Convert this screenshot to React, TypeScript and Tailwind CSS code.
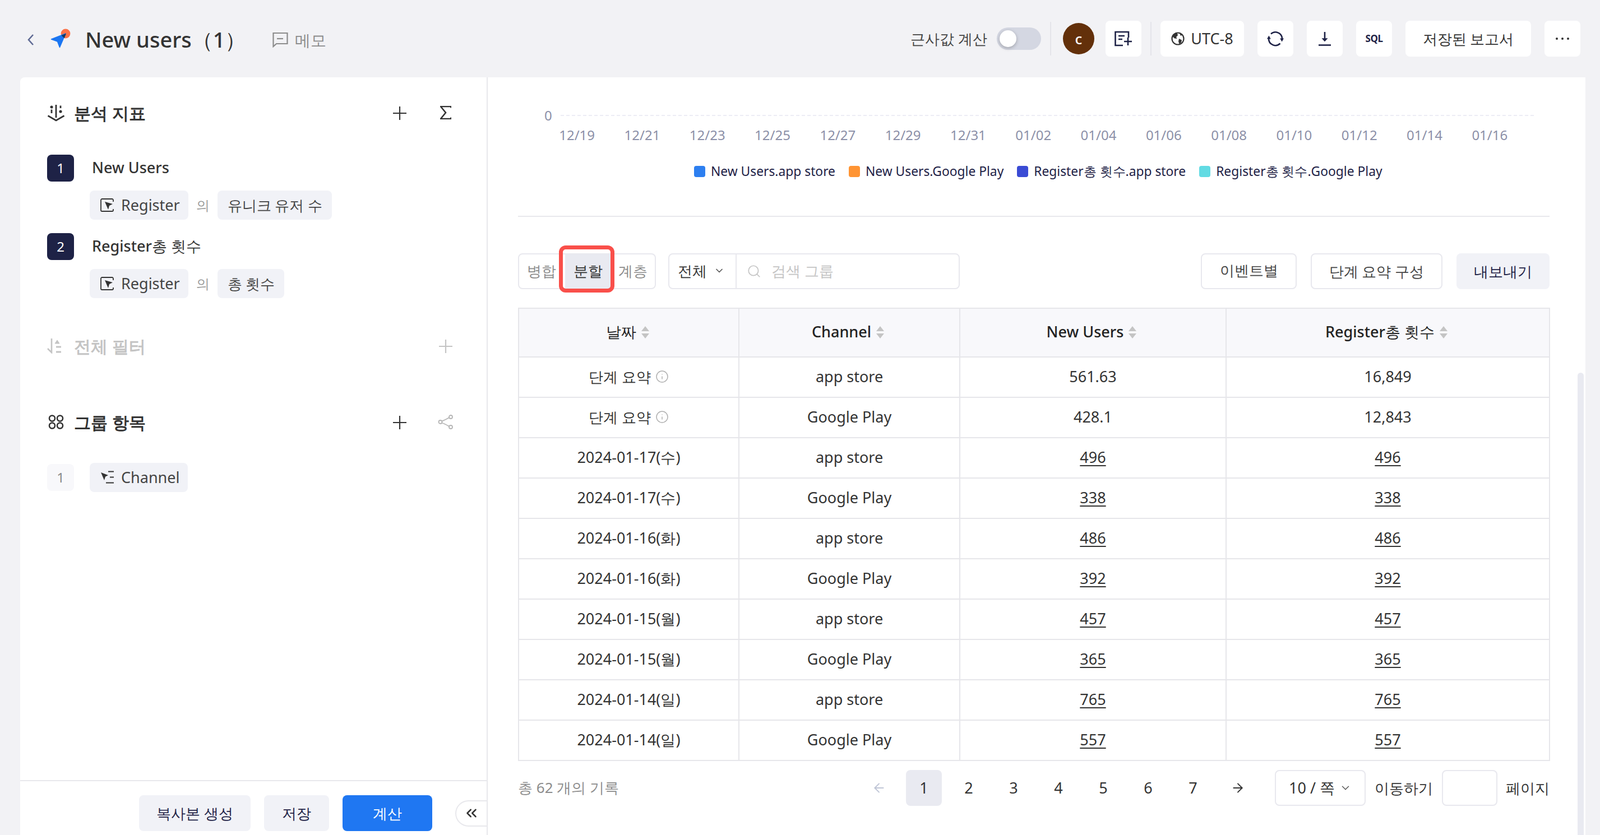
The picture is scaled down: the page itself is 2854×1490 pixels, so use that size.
import { ArrowLeft, ArrowRight, ChevronDown, ChevronsLeft, Info, Search } from 'lucide-react';

const chartDates = ['12/19', '12/21', '12/23', '12/25', '12/27', '12/29', '12/31', '01/02', '01/04', '01/06', '01/08', '01/10', '01/12', '01/14', '01/16'];

const legend = [
  { label: 'New Users.app store', color: 'bg-[#2d7ff0]' },
  { label: 'New Users.Google Play', color: 'bg-[#ff9433]' },
  { label: 'Register총 횟수.app store', color: 'bg-[#3a4bd4]' },
  { label: 'Register총 횟수.Google Play', color: 'bg-[#62dbe3]' },
];

const rows = [
  { date: '2024-01-17(수)', channel: 'app store', a: '496', b: '496' },
  { date: '2024-01-17(수)', channel: 'Google Play', a: '338', b: '338' },
  { date: '2024-01-16(화)', channel: 'app store', a: '486', b: '486' },
  { date: '2024-01-16(화)', channel: 'Google Play', a: '392', b: '392' },
  { date: '2024-01-15(월)', channel: 'app store', a: '457', b: '457' },
  { date: '2024-01-15(월)', channel: 'Google Play', a: '365', b: '365' },
  { date: '2024-01-14(일)', channel: 'app store', a: '765', b: '765' },
  { date: '2024-01-14(일)', channel: 'Google Play', a: '557', b: '557' },
];

function Logo() {
  return (
    <svg width="36" height="36" viewBox="0 0 36 36">
      <circle cx="27" cy="9" r="8.4" fill="#fb7248" />
      <path d="M1.5 19 L27 9 L16.5 33.5 L12.5 23 Z" fill="#1b76f2" stroke="#1b76f2" strokeWidth="1.5" strokeLinejoin="round" />
      <path d="M19.5 12.2 L28 8.8 L24.8 17.2 Z" fill="#103a62" />
    </svg>
  );
}

function PlusIcon({ className }: { className: string }) {
  return (
    <svg width="24" height="24" viewBox="0 0 24 24" className={className}>
      <path d="M12 0V24M0 12H24" stroke="currentColor" strokeWidth="2.2" />
    </svg>
  );
}

function SigmaIcon() {
  return (
    <svg width="20" height="24" viewBox="0 0 20 24" className="text-[#333]">
      <path d="M19.5 3.5V1H1L10 12L1 23H19.5V20.5" fill="none" stroke="currentColor" strokeWidth="2.6" />
    </svg>
  );
}

function MetricIcon() {
  return (
    <svg width="32" height="32" viewBox="0 0 32 32" fill="none" stroke="#333" strokeWidth="2.8">
      <path d="M1.5 21.5L16 30L30.5 21.5" />
      <path d="M16 2V25" />
      <path d="M8 10.5V17M24 3.5V8" />
      <circle cx="8" cy="6" r="1.2" fill="#333" />
      <circle cx="24" cy="14" r="1.2" fill="#333" />
    </svg>
  );
}

function FilterIcon() {
  return (
    <svg width="26" height="28" viewBox="0 0 26 28" fill="none" stroke="#c4c4c4" strokeWidth="2.6">
      <path d="M8 1V26L1 19" />
      <path d="M14 10L18 4L22 10Z" fill="#c4c4c4" strokeWidth="1" />
      <path d="M16 16H25M16 25H25" strokeWidth="3" />
    </svg>
  );
}

function GroupIcon() {
  return (
    <svg width="32" height="32" viewBox="0 0 32 32" fill="none" stroke="#333" strokeWidth="2.6">
      <circle cx="9" cy="9.5" r="5" />
      <circle cx="23" cy="9.5" r="5" />
      <circle cx="9" cy="22.5" r="5" />
      <circle cx="23" cy="22.5" r="5" />
    </svg>
  );
}

function ShareIcon() {
  return (
    <svg width="28" height="28" viewBox="0 0 28 28" fill="none" stroke="#b5b5b5" strokeWidth="1.8">
      <circle cx="4.5" cy="14" r="3" />
      <circle cx="23" cy="5" r="3" />
      <circle cx="23" cy="23" r="3" />
      <path d="M7 12.5C12 11 17 8 20.5 6M7 15.5C12 17 17 20 20.5 22" />
    </svg>
  );
}

function EventIcon() {
  return (
    <svg width="24" height="24" viewBox="0 0 24 24" fill="none" className="shrink-0">
      <path d="M23 6V3C23 2 22 1 21 1H3C2 1 1 2 1 3V21C1 22 2 23 3 23H21C22 23 23 22 23 21V19" stroke="#333" strokeWidth="1.8" />
      <path d="M8 6L22 10L16 13L14 20Z" fill="#333" />
    </svg>
  );
}

function ChannelIcon() {
  return (
    <svg width="24" height="24" viewBox="0 0 24 24" fill="none" className="shrink-0">
      <path d="M1 3L14 8L9 10.5L7 17Z" fill="#333" />
      <path d="M14 1.5H24M17 11.5H24M10 21.5H24" stroke="#333" strokeWidth="1.8" />
    </svg>
  );
}

function SortIcon() {
  return (
    <svg width="16" height="24" viewBox="0 0 16 24" className="shrink-0">
      <path d="M8 1L15 10H1Z" fill="#c4c4c4" />
      <path d="M8 23L15 14H1Z" fill="#c4c4c4" />
    </svg>
  );
}

function Section({ icon, title, muted, children }: { icon: React.ReactNode; title: string; muted?: boolean; children: React.ReactNode }) {
  return (
    <div className="flex h-12 items-center">
      <div className="flex w-[48px] items-center">{icon}</div>
      <span className={`text-[30px] font-semibold ${muted ? 'text-[#c4c4c4]' : 'text-[#333]'}`}>{title}</span>
      <div className="ml-auto flex items-center">{children}</div>
    </div>
  );
}

function Chip({ icon, children }: { icon?: React.ReactNode; children: React.ReactNode }) {
  return (
    <div className={`flex h-[52px] items-center gap-[13px] rounded-lg bg-[#f1f2f7] text-[#444] ${icon ? 'pr-[15px] pl-[19px] text-[27px]' : 'pr-[17px] pl-[18px] text-[26px]'}`}>
      {icon}
      {children}
    </div>
  );
}

function Metric({ index, name, agg }: { index: number; name: string; agg: string }) {
  return (
    <div>
      <div className="flex h-12 items-center">
        <div className="flex h-12 w-12 items-center justify-center rounded-lg bg-[#1e2246] text-[24px] text-white">{index}</div>
        <span className="mb-[2px] ml-[32px] text-[27px] font-medium text-[#333]">{name}</span>
      </div>
      <div className="mt-4 flex items-center pl-[76px]">
        <Chip icon={<EventIcon />}>Register</Chip>
        <span className="mx-[14px] text-[24px] text-[#9a9a9a]">의</span>
        <Chip>{agg}</Chip>
      </div>
    </div>
  );
}

function HeaderButton({ children, className = 'w-16' }: { children: React.ReactNode; className?: string }) {
  return <div className={`flex h-16 items-center justify-center rounded-lg bg-white text-[#333] ${className}`}>{children}</div>;
}

function HeadCell({ label }: { label: string }) {
  return (
    <th className="border-2 border-[#e6e6ea] bg-[#f8f8fb] pb-[2px] text-[27px] font-medium text-[#222]">
      <span className="mr-1 inline-flex items-center gap-[8px]">
        {label}
        <SortIcon />
      </span>
    </th>
  );
}

function SummaryCell() {
  return (
    <td className="border-2 border-[#e6e6ea] pb-[2px]">
      <span className="inline-flex items-center gap-2 text-[26px]">
        단계 요약
        <Info size={24} color="#b0b0b0" strokeWidth={1.5} />
      </span>
    </td>
  );
}

export default function App() {
  return (
    <div className="flex h-[1490px] w-[2854px] flex-col overflow-hidden bg-[#f2f2f5] [font-family:Roboto,'Noto_Sans_CJK_KR',sans-serif]">
      <header className="flex h-[138px] shrink-0 items-center pr-[35px] pl-[48px]">
        <svg width="14" height="22" viewBox="0 0 14 22" fill="none" stroke="#5f6a94" strokeWidth="2.6" className="mt-1">
          <path d="M11 2L3 11L11 20" />
        </svg>
        <div className="ml-[28px] flex items-center">
          <Logo />
        </div>
        <h1 className="mt-[3px] ml-[26px] text-[38px] font-medium text-[#333]">New users（1）</h1>
        <div className="mt-[3px] ml-[47px] flex items-center gap-3 text-[28px] text-[#8c8c8c]">
          <svg width="28" height="28" viewBox="0 0 28 28" fill="none" stroke="#8c8c8c" strokeWidth="2.2">
            <path d="M1.5 2H26.5V21H7L1.5 26Z" />
            <path d="M8 12H19" />
          </svg>
          메모
        </div>
        <div className="ml-auto flex items-center">
          <span className="text-[26px] text-[#444]">근사값 계산</span>
          <div className="ml-[17px] flex h-10 w-[79px] items-center rounded-full bg-[#d4d7e2] pl-[5px]">
            <div className="h-[30px] w-[30px] rounded-full bg-white shadow-[0_2px_6px_rgba(0,0,0,0.25)]" />
          </div>
          <div className="mx-[16px] h-[60px] w-[2px] bg-[#e4e4ea]" />
          <div className="ml-[5px] flex h-14 w-14 items-center justify-center rounded-full bg-[#63300a] text-[26px] font-medium text-white">c</div>
          <HeaderButton className="ml-5 w-16">
            <svg width="32" height="32" viewBox="0 0 32 32" fill="none" stroke="#1e2246" strokeWidth="2.6">
              <path d="M25 14V4H1.5V28H15" />
              <path d="M7 11H18M7 17H14" />
              <path d="M24 14V28M17 21H31" />
            </svg>
          </HeaderButton>
          <div className="mx-[16px] h-[60px] w-[2px] bg-[#e4e4ea]" />
          <HeaderButton className="w-[149px] gap-[11px] text-[27px]">
            <svg width="24" height="24" viewBox="0 0 24 24">
              <circle cx="12" cy="12" r="10.5" fill="none" stroke="#333" strokeWidth="2.2" />
              <path d="M6 3L11 2.5L12 6L9 9L10.5 12L6 11.5L2.5 8Z" fill="#333" />
              <path d="M14 12L19 14.5L18 19L14.5 21.5L13 17Z" fill="#333" />
              <path d="M15 2.5L20 5L17 7Z" fill="#333" />
            </svg>
            UTC-8
          </HeaderButton>
          <div className="ml-6 flex items-center gap-6">
            <HeaderButton>
              <svg width="30" height="30" viewBox="0 0 30 30" fill="none" stroke="#1e2246" strokeWidth="2.6">
                <path d="M7 6.5A12 12 0 0 1 27 15" />
                <path d="M23.5 23.5A12 12 0 0 1 3 15" />
                <path d="M23.2 14.5H30L26.6 20.5Z" fill="#1e2246" stroke="none" />
                <path d="M0 15.5H6.8L3.4 9.5Z" fill="#1e2246" stroke="none" />
              </svg>
            </HeaderButton>
            <HeaderButton>
              <svg width="24" height="26" viewBox="0 0 24 26" fill="none" stroke="#1e2246" strokeWidth="2.6">
                <path d="M12 1V16" />
                <path d="M7 12.5H17L12 18Z" fill="#1e2246" strokeWidth="0.5" />
                <path d="M1 24.5H23" />
              </svg>
            </HeaderButton>
            <HeaderButton>
              <span className="text-[17px] font-bold tracking-[-0.5px] text-[#1e2246]">SQL</span>
            </HeaderButton>
            <HeaderButton className="w-[224px] text-[26px]">저장된 보고서</HeaderButton>
            <HeaderButton>
              <svg width="26" height="6" viewBox="0 0 26 6" fill="#333">
                <circle cx="3" cy="3" r="2" />
                <circle cx="13" cy="3" r="2" />
                <circle cx="23" cy="3" r="2" />
              </svg>
            </HeaderButton>
          </div>
        </div>
      </header>

      <div className="flex min-h-0 flex-1 pl-[36px]">
        <aside className="flex w-[834px] shrink-0 flex-col rounded-tl-lg border-r-2 border-[#e8e8ec] bg-white">
          <div className="flex-1 pt-[39px] pr-[48px] pl-[48px]">
            <Section icon={<MetricIcon />} title="분석 지표">
              <PlusIcon className="mt-[2px] text-[#333]" />
              <div className="mr-[15px] ml-[60px]">
                <SigmaIcon />
              </div>
            </Section>
            <div className="mt-[51px] flex flex-col gap-6">
              <Metric index={1} name="New Users" agg="유니크 유저 수" />
              <Metric index={2} name="Register총 횟수" agg="총 횟수" />
            </div>
            <div className="mt-[61px]">
              <Section icon={<FilterIcon />} title="전체 필터" muted>
                <PlusIcon className="mt-[2px] mr-[13px] text-[#c4c4c4]" />
              </Section>
            </div>
            <div className="mt-[88px]">
              <Section icon={<GroupIcon />} title="그룹 항목">
                <PlusIcon className="mt-[2px] text-[#333]" />
                <div className="mr-[11px] ml-[56px]">
                  <ShareIcon />
                </div>
              </Section>
            </div>
            <div className="mt-[49px] flex items-center">
              <div className="flex h-12 w-12 items-center justify-center rounded-lg bg-[#f8f8fb] text-[24px] text-[#888]">1</div>
              <div className="ml-7">
                <Chip icon={<ChannelIcon />}>Channel</Chip>
              </div>
            </div>
          </div>
          <div className="flex h-[98px] shrink-0 items-center justify-end border-t-2 border-[#e8e8ec] pt-[18px] text-[26px]">
            <button className="h-16 w-[199px] rounded-lg bg-[#f1f2f7] text-[#1e2246]">복사본 생성</button>
            <button className="ml-6 h-16 w-[116px] rounded-lg bg-[#f1f2f7] text-[#1e2246]">저장</button>
            <button className="ml-6 h-16 w-[160px] rounded-lg bg-[#1f77f2] text-white">계산</button>
            <div className="ml-[41px] flex h-[47px] w-[56px] items-center justify-center rounded-l-full border-2 border-r-0 border-[#e8e8ec] bg-white">
              <ChevronsLeft size={30} color="#333" strokeWidth={2} />
            </div>
          </div>
        </aside>

        <main className="relative w-[1958px] shrink-0 bg-white pt-[56px] pl-[54px]">
          <div className="w-[1840px]">
            <div className="flex h-6 items-center pl-[47px] text-[24px] text-[#8c90a8]">
              <span className="w-[13px]">0</span>
              <div className="ml-4 w-[1736px] border-t-2 border-dashed border-[#ececf5]" />
            </div>
            <div className="mt-[5px] grid h-8 grid-cols-[repeat(15,116.3px)] items-center pl-[47px] text-center text-[24px] text-[#8c90a8]">
              {chartDates.map((d) => (
                <span key={d}>{d}</span>
              ))}
            </div>
            <div className="mt-[35px] flex h-8 items-center gap-6 pl-[314px] text-[22.8px] text-[#1e2246]">
              {legend.map((l) => (
                <div key={l.label} className="flex items-center gap-[10px]">
                  <span className={`h-5 w-5 rounded ${l.color}`} />
                  {l.label}
                </div>
              ))}
            </div>
            <div className="mt-[63px] h-[2px] bg-[#e8e8ec]" />

            <div className="mt-[65px] flex h-16 items-center text-[26px]">
              <div className="relative flex h-16 w-[246px] items-center rounded-lg border-2 border-[#e8e8ee] text-[#8c8c8c]">
                <span className="mb-[2px] ml-[14px]">병합</span>
                <span className="ml-[16px] flex h-full w-[82px] items-center justify-center bg-[#e9eaf1] pb-[2px] font-medium text-[#333]">분할</span>
                <span className="mb-[2px] ml-[13px]">계층</span>
                <div className="absolute top-[-16px] left-[71px] h-[84px] w-[99px] rounded-xl border-[7px] border-[#f94f4a]" />
              </div>
              <div className="ml-[22px] flex h-16 w-[520px] items-center rounded-lg border-2 border-[#e8e8ee]">
                <div className="flex h-full w-[120px] items-center border-r-2 border-[#e8e8ee] pb-[2px] pl-[15px] text-[#333]">
                  전체
                  <ChevronDown size={20} className="ml-[12px]" color="#555" />
                </div>
                <Search size={26} className="ml-[18px]" color="#c4c4c4" strokeWidth={1.6} />
                <span className="mb-[2px] ml-[18px] text-[#c4c4c4]">검색 그룹</span>
              </div>
              <div className="ml-auto flex items-center gap-[25px]">
                <button className="h-16 w-[171px] rounded-lg border-2 border-[#e8e8ee] pb-1 text-[#444]">이벤트별</button>
                <button className="h-16 w-[235px] rounded-lg border-2 border-[#e8e8ee] text-[#444]">단계 요약 구성</button>
                <button className="h-16 w-[166px] rounded-lg bg-[#f1f2f7] text-[#1e2246]">내보내기</button>
              </div>
            </div>

            <table className="mt-[33px] w-[1839px] table-fixed border-collapse text-center text-[27px] text-[#333]">
              <colgroup>
                <col className="w-[393px]" />
                <col className="w-[394px]" />
                <col className="w-[475px]" />
                <col className="w-[577px]" />
              </colgroup>
              <thead>
                <tr className="h-[87px]">
                  <HeadCell label="날짜" />
                  <HeadCell label="Channel" />
                  <HeadCell label="New Users" />
                  <HeadCell label="Register총 횟수" />
                </tr>
              </thead>
              <tbody>
                <tr className="h-[72px]">
                  <SummaryCell />
                  <td className="border-2 border-[#e6e6ea] pb-[2px]">app store</td>
                  <td className="border-2 border-[#e6e6ea] pb-[2px]">561.63</td>
                  <td className="border-2 border-[#e6e6ea] pb-[2px]">16,849</td>
                </tr>
                <tr className="h-[72px]">
                  <SummaryCell />
                  <td className="border-2 border-[#e6e6ea] pb-[2px]">Google Play</td>
                  <td className="border-2 border-[#e6e6ea] pb-[2px]">428.1</td>
                  <td className="border-2 border-[#e6e6ea] pb-[2px]">12,843</td>
                </tr>
                {rows.map((r) => (
                  <tr key={r.date + r.channel} className="h-[72px]">
                    <td className="border-2 border-[#e6e6ea] pb-[2px]">{r.date}</td>
                    <td className="border-2 border-[#e6e6ea] pb-[2px]">{r.channel}</td>
                    <td className="border-2 border-[#e6e6ea] pb-[2px] underline underline-offset-4">{r.a}</td>
                    <td className="border-2 border-[#e6e6ea] pb-[2px] underline underline-offset-4">{r.b}</td>
                  </tr>
                ))}
              </tbody>
            </table>

            <div className="mt-4 flex h-16 items-center text-[27px] text-[#333]">
              <span className="mb-[2px] text-[26px] text-[#8c8c8c]">총 62 개의 기록</span>
              <div className="ml-auto flex items-center gap-4">
                <div className="flex h-16 w-16 items-center justify-center">
                  <ArrowLeft size={26} color="#bfc5d6" strokeWidth={1.8} />
                </div>
                {[1, 2, 3, 4, 5, 6, 7].map((n) => (
                  <div key={n} className={`flex h-16 w-16 items-center justify-center rounded-lg ${n === 1 ? 'bg-[#e9eaf1]' : ''}`}>
                    {n}
                  </div>
                ))}
                <div className="flex h-16 w-16 items-center justify-center">
                  <ArrowRight size={26} color="#333" strokeWidth={1.8} />
                </div>
              </div>
              <div className="ml-[34px] flex h-16 w-[162px] items-center justify-center gap-[8px] rounded-lg border-2 border-[#e8e8ee]">
                10 / 쪽
                <ChevronDown size={22} color="#555" strokeWidth={1.6} />
              </div>
              <span className="ml-[16px] text-[26px]">이동하기</span>
              <div className="ml-[16px] h-16 w-[99px] rounded-lg border-2 border-[#e8e8ee]" />
              <span className="ml-[15px] text-[26px]">페이지</span>
            </div>
          </div>
          <div className="absolute top-[527px] bottom-0 left-[1944px] w-[11px] rounded-t-full bg-[#e9eaf1]" />
        </main>
      </div>
    </div>
  );
}
